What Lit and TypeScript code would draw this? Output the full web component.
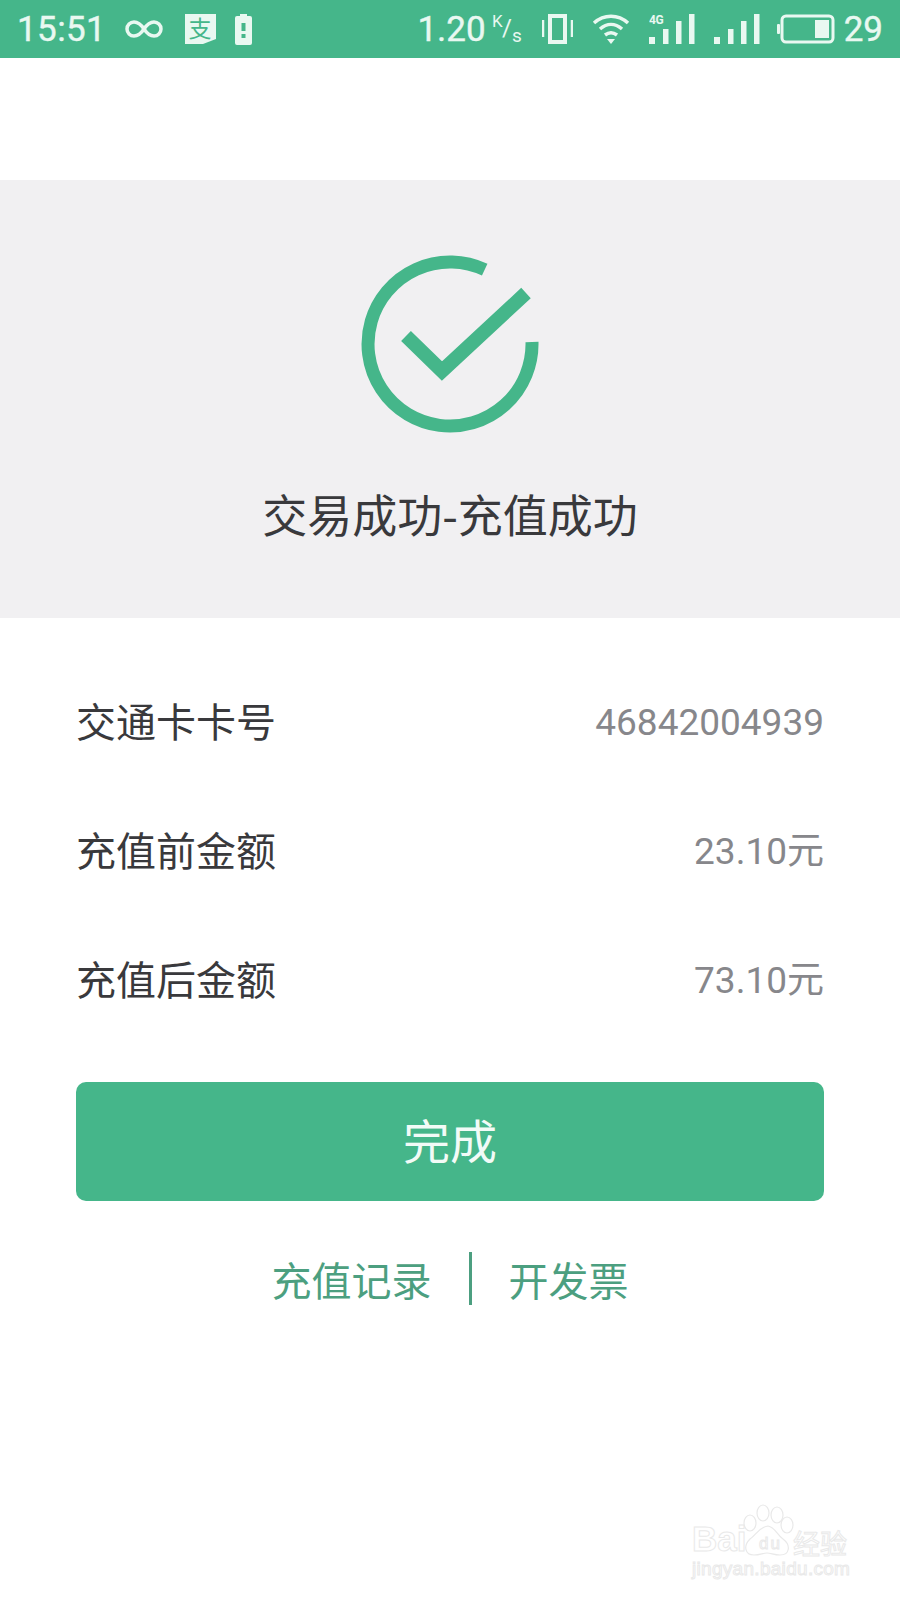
import { LitElement, html, css } from "lit";
import { customElement } from "lit/decorators.js";

const rows = [
  ["交通卡卡号", "46842004939"],
  ["充值前金额", "23.10元"],
  ["充值后金额", "73.10元"],
];

@customElement("app-root")
export class AppRoot extends LitElement {
  static styles = css`
    :host {
      display: block;
      position: relative;
      width: 900px;
      height: 1600px;
      background: #fff;
      overflow: hidden;
      font-family: "Noto Sans CJK SC", Roboto, sans-serif;
    }
    .status {
      height: 58px;
      background: #45b68a;
      color: #e9f8f1;
      display: flex;
      align-items: center;
      justify-content: space-between;
      padding: 0 17px 0 17px;
      box-sizing: border-box;
      font-family: Roboto, sans-serif;
      font-size: 35px;
      -webkit-text-stroke: 0.4px #e9f8f1;
    }
    .status svg { display: block; flex: none; }
    .left, .right { display: flex; align-items: center; }
    .time { margin-right: 18px; letter-spacing: 0.4px; }
    .infinity { margin-right: 21px; }
    .alipay { margin-right: 19px; }
    .speed { margin: 0 18px 0 6px; }
    .vib { margin-right: 19px; }
    .wifi { margin-right: 19px; }
    .sig4g { margin-right: 19px; }
    .sig { margin-right: 17px; }
    .batt { margin-right: 9px; }
    .spacer { height: 122px; }
    .hero {
      height: 438px;
      background: #f1f0f2;
      display: flex;
      flex-direction: column;
      align-items: center;
      box-sizing: border-box;
      padding-top: 74px;
    }
    .hero svg { display: block; }
    .title {
      margin-top: 50px;
      font-size: 45px;
      line-height: 60px;
      color: #39393c;
      white-space: nowrap;
    }
    .rows { padding: 40px 76px 0; }
    .row {
      height: 129px;
      display: flex;
      align-items: center;
      justify-content: space-between;
      font-size: 40px;
      color: #39393c;
    }
    .label { line-height: 50px; padding-bottom: 6px; }
    .value {
      font-family: Roboto, "Noto Sans CJK SC", sans-serif;
      font-size: 37px;
      line-height: 50px;
      color: #87878b;
    }
    .btn {
      margin: 37px 76px 0;
      height: 119px;
      border-radius: 10px;
      background: #45b68a;
      color: #f2fbf7;
      font-size: 47px;
      line-height: 60px;
      padding-bottom: 6px;
      box-sizing: border-box;
      display: flex;
      align-items: center;
      justify-content: center;
    }
    .links {
      margin-top: 51px;
      height: 53px;
      display: flex;
      align-items: center;
      justify-content: center;
      gap: 37px;
      font-size: 40px;
      color: #4c9f80;
    }
    .divider { width: 3px; height: 53px; background: #4c9f80; }
    .mark {
      position: absolute;
      left: 690px;
      top: 1500px;
      width: 170px;
      height: 85px;
      color: transparent;
      font-family: "Liberation Sans", sans-serif;
    }
    .mark svg { position: absolute; left: 0; top: 0; }
    .mark span {
      position: absolute;
      white-space: nowrap;
      -webkit-text-stroke: 1px #e9e9e9;
    }
    .bai { left: 2px; top: 19px; font-size: 35px; line-height: 40px; font-weight: 700; }
    .du { left: 69px; top: 34px; font-size: 17px; line-height: 20px; letter-spacing: 2px; }
    .jing { left: 103px; top: 29px; font-size: 27px; line-height: 27px; font-family: "Noto Sans CJK SC", sans-serif; }
    .url { left: 2px; top: 58px; font-size: 19px; line-height: 22px; letter-spacing: 0.3px; }
  `;

  render() {
    return html`
      <div class="status">
        <div class="left">
          <span class="time">15:51</span>
          <svg class="infinity" width="40" height="30" viewBox="0 0 40 30">
            <path d="M20 15c-3-4.500-6-7-10-7a7 7 0 0 0 0 14c4 0 7-2.500 10-7s6-7 10-7a7 7 0 0 1 0 14c-4 0-7-2.500-10-7z" fill="none" stroke="#e9f8f1" stroke-width="3.500"/>
          </svg>
          <svg class="alipay" width="31" height="30" viewBox="0 0 31 30">
            <rect width="31" height="30" fill="#e9f8f1"/>
            <path d="M18 30L31 25v5z" fill="#45b68a"/>
            <text x="15" y="23" text-anchor="middle" font-family="Noto Sans CJK SC, sans-serif" font-size="23" fill="#45b68a">支</text>
          </svg>
          <svg width="17" height="32" viewBox="0 0 17 32">
            <path d="M5 1h7v2h3a2 2 0 0 1 2 2v25a2 2 0 0 1-2 2H2a2 2 0 0 1-2-2V5a2 2 0 0 1 2-2h3z" fill="#e9f8f1"/>
            <path d="M6.500 10h4v8h-4zM6.500 21h4v4h-4z" fill="#45b68a"/>
          </svg>
        </div>
        <div class="right">
          <span>1.20</span>
          <svg class="speed" width="32" height="34" viewBox="0 0 32 34">
            <text x="0" y="15" font-family="Roboto, sans-serif" font-size="17" fill="#e9f8f1">K</text>
            <text x="10" y="24" font-family="Roboto, sans-serif" font-size="24" fill="#e9f8f1">/</text>
            <text x="20" y="30" font-family="Roboto, sans-serif" font-size="19" fill="#e9f8f1">s</text>
          </svg>
          <svg class="vib" width="31" height="30" viewBox="0 0 31 30">
            <path d="M1 6v17M30 6v17" stroke="#e9f8f1" stroke-width="2.500" fill="none"/>
            <rect x="8" y="2" width="15" height="26" fill="none" stroke="#e9f8f1" stroke-width="4"/>
          </svg>
          <svg class="wifi" width="38" height="32" viewBox="0 0 38 32">
            <path d="M2 10c10-9 24-9 34 0M8 16c7-6 15-6 22 0M13 22c4-3 8-3 12 0" fill="none" stroke="#e9f8f1" stroke-width="3.500"/>
            <path d="M15 26h8l-4 5z" fill="#e9f8f1"/>
          </svg>
          <svg class="sig4g" width="46" height="30" viewBox="0 0 46 30">
            <text x="0" y="10" font-family="Roboto, sans-serif" font-size="12" font-weight="700" fill="#e9f8f1" letter-spacing="-0.5">4G</text>
            <path d="M0 23h6v7H0zM14 15h5.500v15H14zM27 7h5.500v23H27zM40 0h5.500v30H40z" fill="#e9f8f1"/>
          </svg>
          <svg class="sig" width="46" height="30" viewBox="0 0 46 30">
            <path d="M0 23h6v7H0zM14 15h5.500v15H14zM27 7h5.500v23H27zM40 0h5.500v30H40z" fill="#e9f8f1"/>
          </svg>
          <svg class="batt" width="58" height="30" viewBox="0 0 58 30">
            <rect x="0" y="10" width="3" height="10" rx="1" fill="#e9f8f1"/>
            <rect x="5" y="2" width="51" height="26" rx="4" fill="none" stroke="#e9f8f1" stroke-width="3"/>
            <rect x="38" y="6" width="14" height="18" fill="#e9f8f1"/>
          </svg>
          <span>29</span>
        </div>
      </div>
      <div class="spacer"></div>
      <div class="hero">
        <svg width="180" height="180" viewBox="0 0 180 180">
          <path d="M124.700 15.700A82 82 0 1 0 172 88" fill="none" stroke="#45b68a" stroke-width="13"/>
          <path d="M46 82l36 35 84-78" fill="none" stroke="#45b68a" stroke-width="14"/>
        </svg>
        <div class="title">交易成功-充值成功</div>
      </div>
      <div class="rows">
        ${rows.map(
          ([k, v]) => html`<div class="row"><span class="label">${k}</span><span class="value">${v}</span></div>`
        )}
      </div>
      <div class="btn">完成</div>
      <div class="links">
        <span>充值记录</span>
        <span class="divider"></span>
        <span>开发票</span>
      </div>
      <div class="mark">
        <svg width="170" height="85" viewBox="0 0 170 85">
          <g fill="none" stroke="#e9e9e9" stroke-width="1.200">
            <ellipse cx="60" cy="23" rx="6" ry="8"/>
            <ellipse cx="73" cy="13" rx="6" ry="8"/>
            <ellipse cx="87" cy="15" rx="6" ry="8"/>
            <ellipse cx="97" cy="25" rx="6" ry="8"/>
            <path d="M78 26c7 1 9 9 15 13 8 6 7 16-3 16-6 0-9-2-13-2s-7 2-13 2c-9 0-11-9-4-16 6-4 9-12 18-13z"/>
          </g>
        </svg>
        <span class="bai">Bai</span>
        <span class="du">du</span>
        <span class="jing">经验</span>
        <span class="url">jingyan.baidu.com</span>
      </div>
    `;
  }
}
